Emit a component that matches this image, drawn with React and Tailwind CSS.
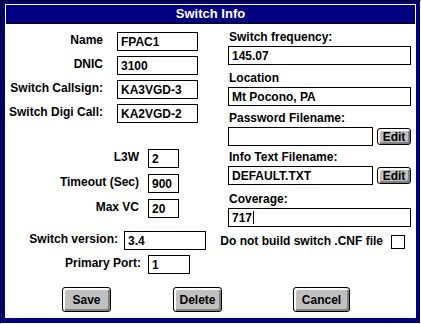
import React from "react";

function Field({ value, className = "", cursor = false }) {
  return (
    <div className={`h-[19px] shrink-0 border border-black bg-white flex items-center pl-[3px] ${className}`}>
      <span className="leading-none">{value}</span>
      {cursor && <span className="ml-[1px] w-[1px] h-[13px] bg-black" />}
    </div>
  );
}

function Button({ label, className = "" }) {
  return (
    <button
      className={`shrink-0 border border-black rounded-[3px] bg-[#c0c0c0] shadow-[inset_2px_2px_0_#ffffff,inset_-2px_-2px_0_#808080] flex items-center justify-center text-black ${className}`}
    >
      {label}
    </button>
  );
}

function Row({ label, labelW, gap, inputW, value }) {
  return (
    <div className="flex items-center h-[19px]">
      <span className={`shrink-0 text-right -mt-[3px] whitespace-nowrap ${labelW}`}>{label}</span>
      <Field value={value} className={`${gap} ${inputW}`} />
    </div>
  );
}

function Group({ label, children, className = "" }) {
  return (
    <div className={className}>
      <div className="h-[14px] leading-[14px] pl-[1px]">{label}</div>
      <div className="mt-[2px] flex items-start">{children}</div>
    </div>
  );
}

export default function App() {
  return (
    <div className="w-[421px] h-[324px] bg-[#000080] border-t border-l border-black border-r border-b border-r-white border-b-white pt-[3px] pl-[4px] pr-[4px] pb-[5px] font-['Liberation_Sans',Arial,sans-serif] font-bold text-[12px] text-black">
      <div className="w-full h-full bg-white p-[1px] flex flex-col">
        {/* Title bar */}
        <div className="h-[19px] bg-[#000080] border-b border-black flex items-center justify-center text-white text-[13px]">
          Switch Info
        </div>

        <div className="flex">
          {/* Left column */}
          <div className="w-[222px] shrink-0 pt-[8px] flex flex-col">
            <div className="flex flex-col gap-[5px]">
              <Row label="Name" labelW="w-[97px]" gap="ml-[14px]" inputW="w-[81px]" value="FPAC1" />
              <Row label="DNIC" labelW="w-[97px]" gap="ml-[14px]" inputW="w-[81px]" value="3100" />
              <Row label="Switch Callsign:" labelW="w-[97px]" gap="ml-[14px]" inputW="w-[81px]" value="KA3VGD-3" />
              <Row label="Switch Digi Call:" labelW="w-[97px]" gap="ml-[14px]" inputW="w-[81px]" value="KA2VGD-2" />
            </div>
            <div className="mt-[26px] flex flex-col gap-[6px]">
              <Row label="L3W" labelW="w-[133px]" gap="ml-[9px]" inputW="w-[31px]" value="2" />
              <Row label="Timeout (Sec)" labelW="w-[133px]" gap="ml-[9px]" inputW="w-[31px]" value="900" />
              <Row label="Max VC" labelW="w-[133px]" gap="ml-[9px]" inputW="w-[31px]" value="20" />
            </div>
            <div className="mt-[13px]">
              <Row label="Switch version:" labelW="w-[112px]" gap="ml-[6px]" inputW="w-[82px]" value="3.4" />
            </div>
            <div className="mt-[5px]">
              <Row label="Primary Port:" labelW="w-[135px]" gap="ml-[7px]" inputW="w-[42px]" value="1" />
            </div>
          </div>

          {/* Right column */}
          <div className="w-[183px] shrink-0 pt-[6px] flex flex-col">
            <Group label="Switch frequency:">
              <Field value="145.07" className="w-[183px]" />
            </Group>
            <Group label="Location" className="mt-[6px]">
              <Field value="Mt Pocono, PA" className="w-[183px]" />
            </Group>
            <Group label="Password Filename:" className="mt-[5px]">
              <Field value="" className="w-[145px]" />
              <Button label="Edit" className="ml-[4px] mt-[1px] w-[34px] h-[17px]" />
            </Group>
            <Group label="Info Text Filename:" className="mt-[4px]">
              <Field value="DEFAULT.TXT" className="w-[145px]" />
              <Button label="Edit" className="ml-[4px] mt-[1px] w-[34px] h-[17px]" />
            </Group>
            <Group label="Coverage:" className="mt-[7px]">
              <Field value="717" cursor className="w-[183px]" />
            </Group>
            <div className="mt-[7px] flex items-center justify-end pr-[6px] whitespace-nowrap">
              <span className="shrink-0 -mt-[2px]">Do not build switch .CNF file</span>
              <span className="shrink-0 ml-[8px] w-[14px] h-[14px] border border-black bg-white" />
            </div>
          </div>
        </div>

        {/* Buttons */}
        <div className="mt-[13px] flex pl-[56px]">
          <Button label="Save" className="w-[49px] h-[25px]" />
          <Button label="Delete" className="ml-[62px] w-[49px] h-[25px]" />
          <Button label="Cancel" className="ml-[71px] w-[57px] h-[25px]" />
        </div>
      </div>
    </div>
  );
}
